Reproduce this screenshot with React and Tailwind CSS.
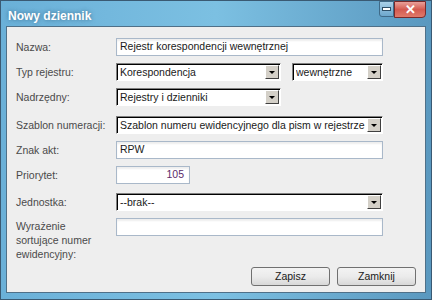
import React from 'react';

const font = { fontFamily: '"Liberation Sans", Arial, sans-serif' };

const Label = ({ children }) => (
  <div className="w-[100px] shrink-0 text-[10.5px] leading-[14px] text-[#4a4a4a]">{children}</div>
);

const TextInput = ({ value, className = '' }) => (
  <div
    className={`h-[18px] bg-white border border-[#a9b8c9] shadow-[inset_0_2px_2px_rgba(0,0,0,0.07)] flex items-center px-[3px] text-[10.5px] text-[#1a1a1a] ${className}`}
  >
    {value}
  </div>
);

const Select = ({ value, className = '' }) => (
  <div
    className={`h-[18px] bg-white border border-[#808080] border-r-white border-b-white shadow-[inset_1px_1px_0_#000] flex items-center pl-[3px] pr-[1px] text-[10.5px] text-[#1a1a1a] ${className}`}
  >
    <span className="flex-1 pt-[1px] truncate">{value}</span>
    <span className="w-[14px] h-[14px] bg-[#d4d0c8] border border-white border-r-[#404040] border-b-[#404040] flex items-center justify-center">
      <span className="w-0 h-0 border-l-[3px] border-r-[3px] border-t-[3px] border-l-transparent border-r-transparent border-t-black" />
    </span>
  </div>
);

const Button = ({ children }) => (
  <button className="w-[79px] h-[19px] rounded-[3px] border border-[#707070] bg-gradient-to-b from-[#f3f3f3] via-[#ebebeb] to-[#d8d8d8] text-[10.5px] text-[#1a1a1a] flex items-center justify-center">
    {children}
  </button>
);

export default function App() {
  return (
    <div style={font} className="w-[432px] h-[300px] bg-white">
      <div className="w-[432px] h-[300px] border border-[#3a5a73] bg-gradient-to-r from-[#6ab0d8] via-[#7cc0e2] to-[#5a98bf] flex flex-col px-[5px] pb-[6px]">
        {/* title bar */}
        <div className="h-[25px] shrink-0 flex items-start">
          <div className="pl-[2px] pt-[6px] text-[12px] font-bold text-white [text-shadow:0_0_4px_rgba(40,80,110,0.7)]">
            Nowy dziennik
          </div>
          <div className="ml-auto flex items-start">
            <div className="w-[15px] h-[16px] mt-[0px] rounded-bl-[3px] border border-[#3f6a88] bg-gradient-to-b from-[#a8d0e8] to-[#6da7cc] flex items-center justify-center">
              <span className="w-[7px] h-[2px] bg-white border border-[#2f4f66] box-content" />
            </div>
            <div className="w-[32px] h-[17px] rounded-br-[4px] border border-[#7a2a2a] bg-gradient-to-b from-[#e8a09a] via-[#d45a50] to-[#e07a6a] flex items-center justify-center text-white text-[13px] font-bold leading-none">
              ✕
            </div>
          </div>
        </div>

        {/* content */}
        <div className="flex-1 border border-[#4f7088] bg-[#eeeeee] flex flex-col pl-[9px] pr-[40px] pt-[11px]">
          <div className="flex items-center">
            <Label>Nazwa:</Label>
            <TextInput value="Rejestr korespondencji wewnętrznej" className="w-[267px]" />
          </div>
          <div className="flex items-center mt-[7px]">
            <Label>Typ rejestru:</Label>
            <Select value="Korespondencja" className="w-[165px]" />
            <Select value="wewnętrzne" className="w-[91px] ml-[11px]" />
          </div>
          <div className="flex items-center mt-[7px]">
            <Label>Nadrzędny:</Label>
            <Select value="Rejestry i dzienniki" className="w-[165px]" />
          </div>
          <div className="flex items-center mt-[10px]">
            <Label>Szablon numeracji:</Label>
            <Select value="Szablon numeru ewidencyjnego dla pism w rejestrze" className="w-[267px]" />
          </div>
          <div className="flex items-center mt-[7px]">
            <Label>Znak akt:</Label>
            <TextInput value="RPW" className="w-[267px]" />
          </div>
          <div className="flex items-center mt-[7px]">
            <Label>Priorytet:</Label>
            <TextInput value={<span className="ml-auto text-[#5a2a6a]">105</span>} className="w-[74px] pr-[5px]" />
          </div>
          <div className="flex items-center mt-[9px]">
            <Label>Jednostka:</Label>
            <Select value="--brak--" className="w-[267px]" />
          </div>
          <div className="flex items-start mt-[7px]">
            <Label>
              <div className="pt-[1px]">
                Wyrażenie
                <br />
                sortujące numer
                <br />
                ewidencyjny:
              </div>
            </Label>
            <TextInput value="" className="w-[267px]" />
          </div>
          <div className="flex justify-end gap-[7px] mt-auto mb-[6px] pr-[-30px] mr-[-31px]">
            <Button>Zapisz</Button>
            <Button>Zamknij</Button>
          </div>
        </div>
      </div>
    </div>
  );
}
